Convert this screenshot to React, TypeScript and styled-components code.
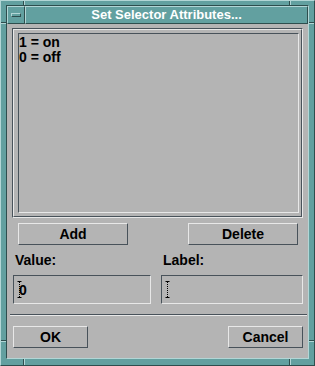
import React from "react";
import styled, { createGlobalStyle } from "styled-components";

const teal = "#62a0a0";
const tealLight = "#b2d6d6";
const tealDark = "#2e4e4e";
const gray = "#b4b4b4";
const shadowLight = "#e8e8e8";
const shadowDark = "#48525a";

const GlobalStyle = createGlobalStyle`
  html, body {
    margin: 0;
    padding: 0;
    background: ${gray};
  }
  body {
    font-family: "Liberation Sans", Arial, sans-serif;
  }
`;

const Window = styled.div`
  position: relative;
  box-sizing: border-box;
  width: 315px;
  height: 366px;
  background: ${teal};
  border-top: 1px solid ${tealLight};
  border-left: 1px solid ${tealLight};
  border-right: 1px solid ${tealDark};
  border-bottom: 1px solid ${tealDark};
  padding: 4px 5px 6px 5px;
  display: flex;
`;

const Inner = styled.div`
  flex: 1;
  display: flex;
  flex-direction: column;
  border-top: 1px solid ${tealDark};
  border-left: 1px solid ${tealDark};
  border-right: 1px solid ${tealLight};
  border-bottom: 1px solid ${tealLight};
`;

const TitleBar = styled.div`
  display: flex;
  height: 18px;
`;

const Raised = styled.div`
  box-sizing: border-box;
  background: ${teal};
  border-top: 1px solid ${tealLight};
  border-left: 1px solid ${tealLight};
  border-right: 1px solid ${tealDark};
  border-bottom: 1px solid ${tealDark};
`;

const MenuButton = styled(Raised)`
  width: 18px;
  display: flex;
  align-items: center;
  justify-content: center;
`;

const MenuBar = styled(Raised)`
  width: 10px;
  height: 4px;
`;

const TitleArea = styled(Raised)`
  flex: 1;
  display: flex;
  align-items: center;
  justify-content: center;
  color: #ffffff;
  font-size: 13px;
  font-weight: bold;
  line-height: 16px;
`;

const Content = styled.div`
  flex: 1;
  background: ${gray};
  display: flex;
  flex-direction: column;
  color: #000;
  font-size: 14px;
  font-weight: bold;
`;

const Etched = styled.div`
  box-sizing: border-box;
  margin: 4px 5px 0 5px;
  height: 190px;
  border-top: 1px solid ${shadowDark};
  border-left: 1px solid ${shadowDark};
  border-right: 1px solid ${shadowLight};
  border-bottom: 1px solid ${shadowLight};
  display: flex;
`;

const EtchedInner = styled.div`
  flex: 1;
  display: flex;
  border-top: 1px solid ${shadowLight};
  border-left: 1px solid ${shadowLight};
  border-right: 1px solid ${shadowDark};
  border-bottom: 1px solid ${shadowDark};
  padding: 3px 2px 3px 4px;
`;

const List = styled.div`
  flex: 1;
  border-top: 1px solid ${shadowDark};
  border-left: 1px solid ${shadowDark};
  border-right: 1px solid ${shadowLight};
  border-bottom: 1px solid ${shadowLight};
  padding: 1px 0 0 0;
`;

const ListItem = styled.div`
  line-height: 15px;
  white-space: pre;
`;

const ButtonRow = styled.div<{ $left: number; $right: number; $top: number }>`
  display: flex;
  justify-content: space-between;
  margin-top: ${(p) => p.$top}px;
  padding: 0 ${(p) => p.$right}px 0 ${(p) => p.$left}px;
`;

const PushButton = styled.button<{ $width: number }>`
  box-sizing: border-box;
  width: ${(p) => p.$width}px;
  height: 22px;
  margin: 0;
  padding: 0;
  background: ${gray};
  border-top: 1px solid ${shadowLight};
  border-left: 1px solid ${shadowLight};
  border-right: 1px solid ${shadowDark};
  border-bottom: 1px solid ${shadowDark};
  font-family: "Liberation Sans", Arial, sans-serif;
  font-size: 14px;
  font-weight: bold;
  color: #000;
  line-height: 20px;
`;

const FieldGrid = styled.div`
  display: grid;
  grid-template-columns: 138px 142px;
  column-gap: 10px;
  row-gap: 7px;
  margin-top: 7px;
  padding-left: 6px;
`;

const FieldLabel = styled.div`
  line-height: 16px;
  padding-left: 2px;
`;

const TextField = styled.div`
  box-sizing: border-box;
  height: 29px;
  display: flex;
  align-items: center;
  padding-left: 3px;
  border-top: 1px solid ${shadowDark};
  border-left: 1px solid ${shadowDark};
  border-right: 1px solid ${shadowLight};
  border-bottom: 1px solid ${shadowLight};
  line-height: 16px;
`;

const FieldValue = styled.span`
  margin-left: -3px;
`;

const Separator = styled.div`
  margin: 10px 1px 0 3px;
  height: 0;
  border-top: 1px solid ${shadowDark};
  border-bottom: 1px solid ${shadowLight};
`;

const Mark = styled.div<{ $vertical?: boolean }>`
  position: absolute;
  ${(p) =>
    p.$vertical
      ? `width: 1px; border-right: 1px solid ${tealLight}; background: ${tealDark};`
      : `height: 1px; width: 5px; border-bottom: 1px solid ${tealLight}; background: ${tealDark};`}
`;

const Cursor = () => (
  <svg width="5" height="17" viewBox="0 0 5 17">
    <path d="M0.5 0.5h4M0.5 16.5h4" stroke="#000" />
    <path d="M2.5 1v15" stroke="#000" strokeDasharray="1 1" />
  </svg>
);

const App: React.FC = () => {
  return (
    <>
      <GlobalStyle />
      <Window>
        <Mark $vertical style={{ left: 22, top: 0, height: 4 }} />
        <Mark $vertical style={{ left: 288, top: 0, height: 4 }} />
        <Mark $vertical style={{ left: 22, top: 358, height: 6 }} />
        <Mark $vertical style={{ left: 288, top: 358, height: 6 }} />
        <Mark style={{ left: 0, top: 21 }} />
        <Mark style={{ left: 0, top: 339 }} />
        <Mark style={{ left: 308, top: 21 }} />
        <Mark style={{ left: 308, top: 339 }} />
        <Inner>
          <TitleBar>
            <MenuButton>
              <MenuBar />
            </MenuButton>
            <TitleArea>Set Selector Attributes...</TitleArea>
          </TitleBar>
          <Content>
            <Etched>
              <EtchedInner>
                <List>
                  <ListItem>1 = on</ListItem>
                  <ListItem>0 = off</ListItem>
                </List>
              </EtchedInner>
            </Etched>
            <ButtonRow $left={11} $right={10} $top={5}>
              <PushButton $width={110}>Add</PushButton>
              <PushButton $width={110}>Delete</PushButton>
            </ButtonRow>
            <FieldGrid>
              <FieldLabel>Value:</FieldLabel>
              <FieldLabel>Label:</FieldLabel>
              <TextField>
                <Cursor />
                <FieldValue>0</FieldValue>
              </TextField>
              <TextField>
                <Cursor />
              </TextField>
            </FieldGrid>
            <Separator />
            <ButtonRow $left={6} $right={5} $top={10}>
              <PushButton $width={75}>OK</PushButton>
              <PushButton $width={75}>Cancel</PushButton>
            </ButtonRow>
          </Content>
        </Inner>
      </Window>
    </>
  );
};

export default App;
